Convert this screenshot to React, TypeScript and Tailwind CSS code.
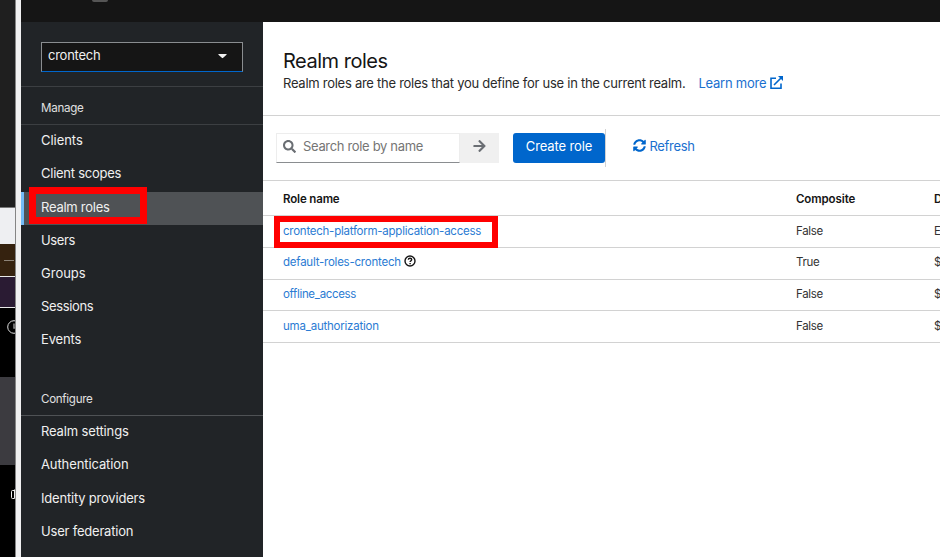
import React from "react";
import { FaSearch, FaArrowRight, FaSyncAlt, FaCaretDown } from "react-icons/fa";

const manage: [string, string][] = [
  ["Clients", "tracking-[-0.05px]"],
  ["Client scopes", "tracking-[-0.25px]"],
  ["Realm roles", "tracking-[-0.25px]"],
  ["Users", "tracking-[-0.35px]"],
  ["Groups", "tracking-[0px]"],
  ["Sessions", "tracking-[-0.35px]"],
  ["Events", "tracking-[-0.15px]"],
];
const configure: [string, string][] = [
  ["Realm settings", "tracking-[-0.14px]"],
  ["Authentication", "tracking-[-0.1px]"],
  ["Identity providers", "tracking-[-0.2px]"],
  ["User federation", "tracking-[-0.2px]"],
];

const roles = [
  { name: "crontech-platform-application-access", composite: "False", desc: "E", h: "h-8 pt-px", track: "tracking-[-0.25px]" },
  { name: "default-roles-crontech", composite: "True", desc: "$", h: "h-8 pb-px", track: "tracking-[-0.23px]", help: true },
  { name: "offline_access", composite: "False", desc: "$", h: "h-[31px]", track: "tracking-[-0.33px]" },
  { name: "uma_authorization", composite: "False", desc: "$", h: "h-8 pt-px", track: "tracking-[-0.23px]" },
];

function NavItem({ label, track }: { label: string; track: string }) {
  const active = label === "Realm roles";
  return (
    <a className={`relative flex h-[33.2px] items-center pb-[2.6px] pl-5 text-[13px] text-[#f0f0f0] ${track} ${active ? "bg-[#4f5255]" : ""}`}>
      {active && <span className="absolute inset-y-0 left-0 w-[3px] bg-[#73bcf7]" />}
      <span>{label}</span>
      {active && <span className="absolute -top-[4.6px] left-[7.6px] h-[36.5px] w-[118px] border-[7px] border-[#ff0000]" />}
    </a>
  );
}

function LeftStrip() {
  return (
    <div className="flex w-[21px] shrink-0 border-r-[5px] border-[#f0f0f1]">
      <div className="flex w-[15px] flex-col overflow-hidden bg-black">
        <div className="h-[207px] shrink-0 bg-[#1f1f1f]" />
        <div className="h-[37px] shrink-0 border-t border-[#777] bg-[#eeeff2]" />
        <div className="flex h-8 shrink-0 items-center bg-[#35220f] pl-1">
          <div className="h-px w-[10px] bg-[#8d8378]" />
        </div>
        <div className="h-8 shrink-0 border-y border-[#e8e8e8] bg-[#2a1b33]" />
        <div className="h-[69px] shrink-0 pl-[7px] pt-3">
          <svg className="h-[14px] w-[14px]" viewBox="0 0 14 14" fill="none" stroke="#ddd">
            <circle cx="7" cy="7" r="6.3" />
            <path d="M7 3.5V8h3" stroke="#888" strokeWidth="1.6" />
          </svg>
        </div>
        <div className="h-[88px] shrink-0 bg-[#3c3b40]" />
        <div className="pl-[11px] pt-6">
          <svg className="h-[11px] w-[10px]" viewBox="0 0 10 11" fill="none" stroke="#eee">
            <path d="M3.5.5v9M3.5 1.5h-2q-1 0-1 1v6q0 1 1 1h2" />
          </svg>
        </div>
      </div>
      <div className="w-px bg-[#858585]" />
    </div>
  );
}

export default function App() {
  return (
    <div className="flex h-[557px] w-[940px] overflow-hidden bg-white font-['Inter','Open_Sans',sans-serif] text-[#151515]">
      <LeftStrip />
      <div className="flex min-w-0 flex-1 flex-col">
        <header className="h-[22px] shrink-0 bg-[#151515] pl-[71px]">
          <div className="h-[2px] w-4 rounded-b-sm bg-[#555]" />
        </header>
        <div className="flex min-h-0 flex-1">
          <nav className="w-[242px] shrink-0 bg-[#212427]">
            <div className="h-[65px] border-b border-[#3c3f42] px-5 pt-5">
              <button className="flex h-[30px] w-[202px] items-center justify-between border border-[#8a8d90] border-b-[#06c] bg-[#151515] pl-[6px] pr-[15px] text-[13px] tracking-[-0.25px] text-[#f0f0f0]">
                <span className="pb-[2px]">crontech</span>
                <FaCaretDown className="mb-[3px] h-[13px] w-[9px]" preserveAspectRatio="none" />
              </button>
            </div>
            <div className="flex h-[38px] items-center border-b border-[#3c3f42] pl-5 pt-[7px] text-[11.6px] tracking-[-0.3px] text-[#e0e0e0]">Manage</div>
            <div className="pt-[0.6px]">
              {manage.map(([l, t]) => <NavItem key={l} label={l} track={t} />)}
            </div>
            <div className="mt-6 flex h-[34px] items-center border-b border-[#4f5255] pl-5 pt-[2px] text-[11.6px] tracking-[-0.3px] text-[#e0e0e0]">Configure</div>
            <div className="pt-[0.8px]">
              {configure.map(([l, t]) => <NavItem key={l} label={l} track={t} />)}
            </div>
          </nav>
          <main className="min-w-0 flex-1 overflow-hidden whitespace-nowrap">
            <section className="h-[94px] border-b border-[#d2d2d2] pl-5 pt-[26px]">
              <h1 className="text-[20px] leading-[26px] tracking-[-0.48px]"><span>Realm roles</span></h1>
              <p className="-mt-px flex items-center text-[13px] leading-5">
                <span className="tracking-[-0.265px] text-[#2a2a2a]">Realm roles are the roles that you define for use in the current realm.</span>
                <a className="ml-[13px] flex items-center text-[#1a70cf]">
                  <span className="tracking-[-0.22px]">Learn more</span>
                  <svg className="mb-px ml-1 h-[13px] w-[13px] text-[#06c]" viewBox="0 0 13 13" fill="none" stroke="currentColor" strokeWidth="1.6">
                    <path d="M6 2.2H1v10h10V7.5M4 9 11 2" />
                    <path d="M8 0h5v5Z" fill="currentColor" stroke="none" />
                  </svg>
                </a>
              </p>
            </section>
            <section className="flex h-[65px] items-start border-b border-[#d2d2d2] pl-[13px] pt-[17px]">
              <div className="flex h-[30px] w-[184px] items-center border border-[#ededed] border-b-[#8a8d90] pl-[6px] text-[13px] tracking-[-0.33px] text-[#757575]">
                <FaSearch className="mr-[7px] mb-[4px] h-[13px] w-[13px] text-[#6a6e73]" />
                <span className="pb-[2px]">Search role by name</span>
              </div>
              <button className="flex h-[30px] w-[39px] items-center justify-center bg-[#f0f0f0] pb-1 text-[#6a6e73]">
                <FaArrowRight className="h-[14px] w-[13px]" />
              </button>
              <button className="ml-[14px] flex h-[30px] w-[92px] items-center justify-center rounded-[3px] bg-[#06c] pb-[2px] text-[13px] tracking-[-0.12px] text-white"><span>Create role</span></button>
              <div className="-mt-1 h-[38px] w-px bg-[#d2d2d2]" />
              <a className="ml-[27px] flex h-[28px] items-center text-[13px] tracking-[-0.33px] text-[#1a70cf]">
                <FaSyncAlt className="mr-[3.5px] mb-[3px] h-[13px] w-[13px] text-[#06c]" />
                <span>Refresh</span>
              </a>
            </section>
            <div className="text-[11.5px]">
              <div className="flex h-[35px] items-center border-b border-[#d2d2d2] pl-5 pt-[4px] font-semibold">
                <div className="w-[513px] shrink-0 tracking-[-0.15px]"><span>Role name</span></div>
                <div className="w-[138px] shrink-0 tracking-[-0.1px]"><span>Composite</span></div>
                <div>D</div>
              </div>
              {roles.map((r, i) => (
                <div key={r.name} className={`relative flex items-center border-b border-[#d2d2d2] pl-5 ${r.h}`}>
                  <div className="flex w-[513px] shrink-0 items-center text-[#2b7bd3]">
                    <span className={r.track}>{r.name}</span>
                    {r.help && (
                      <svg className="ml-[3px] mb-[4px] h-[12px] w-[12px]" viewBox="0 0 12 12" fill="none" stroke="#151515">
                        <circle cx="6" cy="6" r="5" strokeWidth="1.4" />
                        <path d="M4.3 4.7Q4.4 3.2 6 3.2q1.7 0 1.7 1.4 0 .8-.8 1.2-.8.4-.8 1.1M6.1 8v1.3" strokeWidth="1.4" />
                      </svg>
                    )}
                  </div>
                  <div className="w-[138px] shrink-0 tracking-[-0.3px] text-[#333]"><span>{r.composite}</span></div>
                  <div className="text-[#333]">{r.desc}</div>
                  {i === 0 && <span className="absolute left-[11px] top-0 h-[32px] w-[224px] border-[6.5px] border-[#ff0000]" />}
                </div>
              ))}
            </div>
          </main>
        </div>
      </div>
    </div>
  );
}
